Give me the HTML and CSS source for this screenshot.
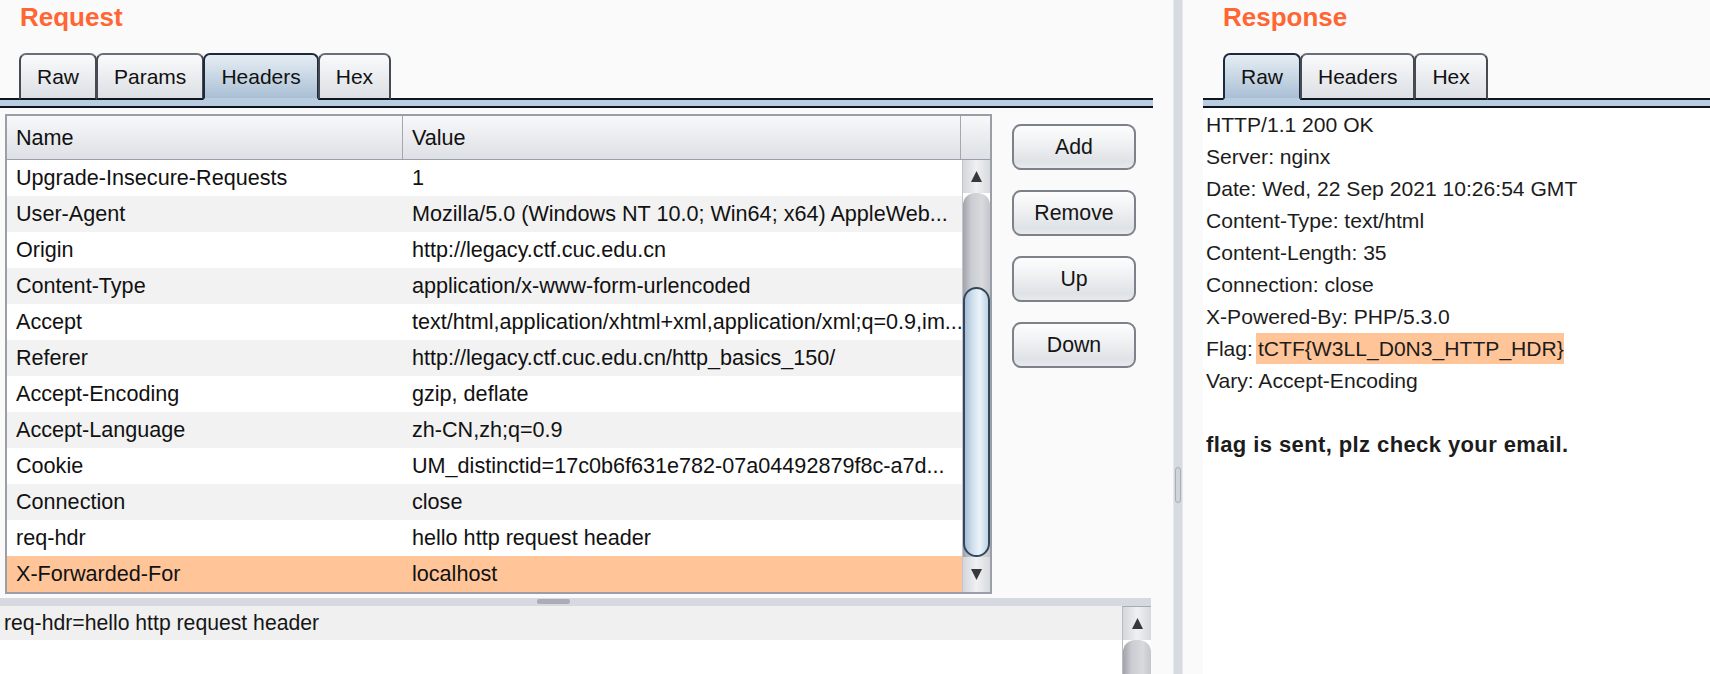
FILE: index.html
```html
<!DOCTYPE html>
<html>
<head>
<meta charset="utf-8">
<link rel="stylesheet" href="styles.css">
</head>
<body>
<div class="app">
  <section class="req">
    <h2 class="title">Request</h2>
    <div class="tabs">
      <div class="tab">Raw</div>
      <div class="tab">Params</div>
      <div class="tab active">Headers</div>
      <div class="tab">Hex</div>
    </div>
    <div class="band"></div>
    <div class="req-main">
      <div class="table">
        <div class="thead">
          <div class="th name">Name</div>
          <div class="th value">Value</div>
          <div class="th corner"></div>
        </div>
        <div class="tbody">
          <div class="rows">
            <div class="row"><span class="c1">Upgrade-Insecure-Requests</span><span class="c2">1</span></div>
            <div class="row"><span class="c1">User-Agent</span><span class="c2">Mozilla/5.0 (Windows NT 10.0; Win64; x64) AppleWeb...</span></div>
            <div class="row"><span class="c1">Origin</span><span class="c2">http://legacy.ctf.cuc.edu.cn</span></div>
            <div class="row"><span class="c1">Content-Type</span><span class="c2">application/x-www-form-urlencoded</span></div>
            <div class="row"><span class="c1">Accept</span><span class="c2">text/html,application/xhtml+xml,application/xml;q=0.9,im...</span></div>
            <div class="row"><span class="c1">Referer</span><span class="c2">http://legacy.ctf.cuc.edu.cn/http_basics_150/</span></div>
            <div class="row"><span class="c1">Accept-Encoding</span><span class="c2">gzip, deflate</span></div>
            <div class="row"><span class="c1">Accept-Language</span><span class="c2">zh-CN,zh;q=0.9</span></div>
            <div class="row"><span class="c1">Cookie</span><span class="c2">UM_distinctid=17c0b6f631e782-07a04492879f8c-a7d...</span></div>
            <div class="row"><span class="c1">Connection</span><span class="c2">close</span></div>
            <div class="row"><span class="c1">req-hdr</span><span class="c2">hello http request header</span></div>
            <div class="row sel"><span class="c1">X-Forwarded-For</span><span class="c2">localhost</span></div>
          </div>
          <div class="vscroll">
            <div class="arrow up"><svg width="11" height="11" viewBox="0 0 11 11"><polygon points="5.5,0 11,11 0,11" fill="#35383d"/></svg></div>
            <div class="track"><div class="thumb"></div></div>
            <div class="arrow down"><svg width="11" height="11" viewBox="0 0 11 11"><polygon points="0,0 11,0 5.5,11" fill="#35383d"/></svg></div>
          </div>
        </div>
      </div>
      <div class="buttons">
        <button class="btn">Add</button>
        <button class="btn">Remove</button>
        <button class="btn">Up</button>
        <button class="btn">Down</button>
      </div>
    </div>
    <div class="splitter"><div class="grip"></div></div>
    <div class="params">
      <div class="ptext">
        <div class="prow">req-hdr=hello http request header</div>
      </div>
      <div class="pscroll">
        <div class="parrow"><svg width="11" height="11" viewBox="0 0 11 11"><polygon points="5.5,0 11,11 0,11" fill="#35383d"/></svg></div>
        <div class="ptrack"></div>
      </div>
    </div>
  </section>
  <div class="divider"><div class="dbar"><div class="dgrip"></div></div></div>
  <section class="resp">
    <h2 class="title">Response</h2>
    <div class="tabs">
      <div class="tab active">Raw</div>
      <div class="tab">Headers</div>
      <div class="tab">Hex</div>
    </div>
    <div class="band"></div>
    <div class="raw">
      <div class="line">HTTP/1.1 200 OK</div>
      <div class="line">Server: nginx</div>
      <div class="line">Date: Wed, 22 Sep 2021 10:26:54 GMT</div>
      <div class="line">Content-Type: text/html</div>
      <div class="line">Content-Length: 35</div>
      <div class="line">Connection: close</div>
      <div class="line">X-Powered-By: PHP/5.3.0</div>
      <div class="line">Flag:<span class="hl">tCTF{W3LL_D0N3_HTTP_HDR}</span></div>
      <div class="line">Vary: Accept-Encoding</div>
      <div class="line"></div>
      <div class="line bold">flag is sent, plz check your email.</div>
    </div>
  </section>
</div>
</body>
</html>
```
FILE: styles.css
```css
* { box-sizing: border-box; }
html, body { margin: 0; padding: 0; }
body {
  width: 1710px;
  height: 674px;
  overflow: hidden;
  background: #fafafa;
  font-family: "Liberation Sans", Arial, sans-serif;
  color: #161616;
}
.app { display: flex; height: 674px; }
.req { width: 1153px; display: flex; flex-direction: column; }
.divider { width: 50px; padding-left: 20px; }
.resp { flex: 1; display: flex; flex-direction: column; }

.title {
  margin: 0;
  height: 52px;
  padding: 1px 0 0 20px;
  font-size: 26px;
  line-height: 32px;
  font-weight: bold;
  color: #ff6633;
}

.tabs {
  display: flex;
  align-items: flex-end;
  height: 48px;
  border-bottom: 2px solid #10161f;
  padding-left: 19px;
}
.resp .tabs { padding-left: 20px; }
.tab {
  height: 47px;
  margin-bottom: -2px;
  padding: 0 16px;
  border: 2px solid #454a53;
  border-top-color: #6a6f77;
  border-bottom-color: #10161f;
  border-radius: 7px 7px 0 0;
  background: linear-gradient(#f9fafb, #eceef1 45%, #dcdfe4);
  font-size: 21px;
  line-height: 43px;
  color: #111;
}
.tab + .tab { margin-left: -1px; }
.tab.active {
  background: linear-gradient(#e6edf4, #cbd9e6 45%, #a9bfd4);
  border-color: #1c2a3b;
  border-bottom-color: #b9cde0;
}
.band {
  height: 8px;
  background: #b9cde0;
  border-bottom: 2px solid #0e141d;
}

.req-main { display: flex; padding: 6px 0 0 5px; }
.table {
  width: 987px;
  height: 480px;
  border: 2px solid #9a9ea6;
  background: #fff;
  display: flex;
  flex-direction: column;
}
.thead {
  display: flex;
  height: 44px;
  border-bottom: 1px solid #9a9ea6;
  background: linear-gradient(#f7f8fa, #eaecef 50%, #dde0e5);
}
.th {
  font-size: 21.6px;
  line-height: 43px;
  padding-left: 9px;
  border-right: 1px solid #a3a7ae;
  color: #111;
}
.th.name { width: 396px; }
.th.value { width: 558px; }
.th.corner { flex: 1; border-right: none; }

.tbody { display: flex; flex: 1; }
.rows { width: 955px; }
.row {
  display: flex;
  height: 36px;
  line-height: 36px;
  font-size: 21.6px;
  white-space: nowrap;
  background: #fff;
  color: #111;
}
.row:nth-child(even) { background: #f2f2f2; }
.row.sel { background: #ffc599; }
.c1 { width: 396px; padding-left: 9px; }
.c2 { flex: 1; padding-left: 9px; overflow: hidden; }

.vscroll {
  width: 28px;
  display: flex;
  flex-direction: column;
  border-left: 1px solid #c2c5cb;
}
.arrow {
  display: flex;
  align-items: center;
  justify-content: center;
  background: linear-gradient(to right, #d3d6db, #eff0f2 50%, #d7dade);
}
.arrow.up { height: 33px; }
.arrow.down { height: 35px; }
.track {
  flex: 1;
  padding-top: 94px;
  border-radius: 12px 12px 0 0;
  background: linear-gradient(to right, #9fa3aa, #c9ccd1 30%, #d8dadd 70%, #c3c6cb);
}
.thumb {
  height: 270px;
  border: 2px solid #34475b;
  border-radius: 14px;
  background: linear-gradient(to right, #a7bed5, #d2e1ef 35%, #ebf3fa 65%, #bfd2e4);
}

.buttons {
  display: flex;
  flex-direction: column;
  gap: 20px;
  padding-top: 10px;
  margin-left: 20px;
}
.btn {
  width: 124px;
  height: 46px;
  padding: 0;
  border: 2px solid #7d828a;
  border-radius: 9px;
  background: linear-gradient(#fdfdfd, #eef0f2 45%, #dfe2e6 85%, #e8eaed);
  font-family: "Liberation Sans", Arial, sans-serif;
  font-size: 21.3px;
  color: #151515;
}

.splitter {
  height: 8px;
  margin: 4px 2px 0 0;
  background: #d6d9df;
  padding-left: 537px;
}
.grip {
  width: 33px;
  height: 5px;
  margin-top: 1px;
  border-radius: 2px;
  background: #a9aeb6;
}

.params { flex: 1; display: flex; margin-right: 2px; background: #fff; }
.ptext { flex: 1; }
.prow {
  height: 34px;
  line-height: 34px;
  padding-left: 4px;
  background: #f0f0f0;
  font-size: 21.2px;
  color: #161616;
}
.pscroll {
  width: 29px;
  display: flex;
  flex-direction: column;
  border-top: 1px solid #a7abb2;
  border-left: 1px solid #b9bcc2;
}
.parrow {
  height: 33px;
  display: flex;
  align-items: center;
  justify-content: center;
  background: linear-gradient(to right, #d3d6db, #eff0f2 50%, #d7dade);
}
.ptrack {
  flex: 1;
  border-radius: 12px 12px 0 0;
  background: linear-gradient(to right, #9fa3aa, #c9ccd1 30%, #d8dadd 70%, #c3c6cb);
}

.dbar {
  width: 10px;
  height: 674px;
  background: #d7dae0;
  border-left: 1px solid #e6e8eb;
  border-right: 1px solid #e6e8eb;
  padding-top: 467px;
}
.dgrip {
  width: 6px;
  height: 36px;
  margin: 0 auto;
  border: 1px solid #a9aeb6;
  border-radius: 3px;
  background: #d0d3d9;
}

.raw {
  flex: 1;
  background: #fff;
  padding: 1px 0 0 3px;
  font-size: 21.1px;
  color: #1c1c1c;
}
.line { height: 32px; line-height: 32px; white-space: pre; }
.line.bold { font-weight: bold; font-size: 22px; letter-spacing: 0.4px; }
.hl {
  display: inline-block;
  margin-left: 3px;
  padding: 0 0 0 2px;
  line-height: 31px;
  background: #ffc599;
}
```
